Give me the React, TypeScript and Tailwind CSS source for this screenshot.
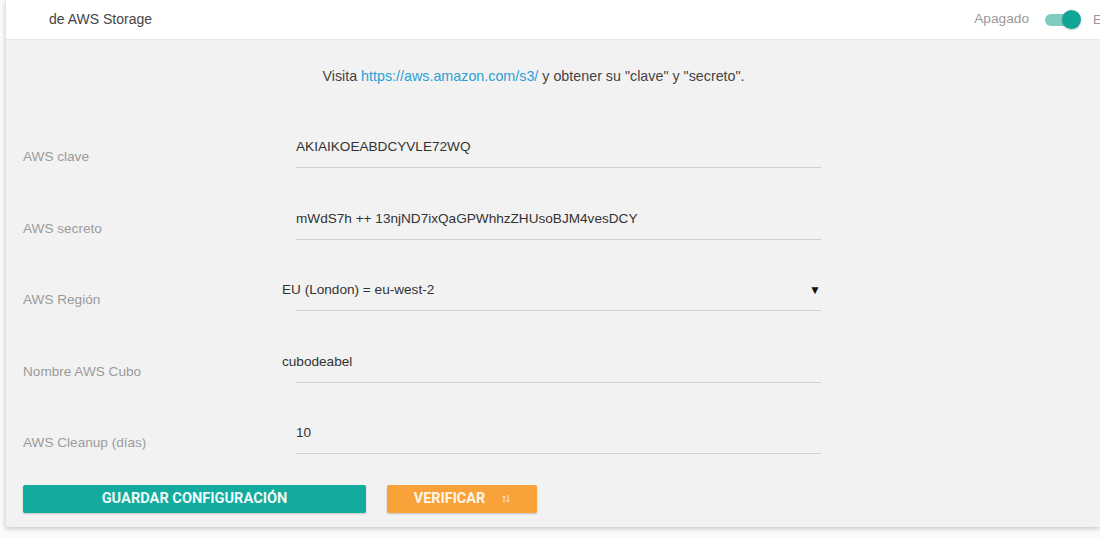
import React from 'react';

const fields = [
  { label: 'AWS clave', value: 'AKIAIKOEABDCYVLE72WQ', shift: false },
  { label: 'AWS secreto', value: 'mWdS7h ++ 13njND7ixQaGPWhhzZHUsoBJM4vesDCY', shift: false },
  { label: 'AWS Región', value: 'EU (London) = eu-west-2', shift: true, select: true },
  { label: 'Nombre AWS Cubo', value: 'cubodeabel', shift: true },
  { label: 'AWS Cleanup (días)', value: '10', shift: false },
];

export default function App() {
  return (
    <div className="min-h-[538px] w-[1100px] overflow-hidden bg-[#fafafa] pl-[5px] font-['Liberation_Sans',Arial,sans-serif]">
      <div className="border-l border-[#e2e2e2] bg-[#f2f2f2] shadow-[0_2px_4px_rgba(0,0,0,0.18)]">
        {/* header */}
        <div className="flex h-[40px] items-center border-b border-[#e8e8e8] bg-white pl-[43px]">
          <span className="text-[14px] text-[#444]">de AWS Storage</span>
          <div className="ml-auto flex items-center">
            <span className="text-[13.7px] text-[#9a9a9a]">Apagado</span>
            <div className="relative ml-[16px] h-[18px] w-[36px]">
              <div className="absolute left-0 top-[4px] h-[12px] w-[33px] rounded-full bg-[#7dcdc3]" />
              <div className="absolute left-[17px] top-[0px] h-[19px] w-[19px] rounded-full bg-[#10a596] shadow-[0_1px_2px_rgba(0,0,0,0.25)]" />
            </div>
            <span className="ml-[12px] w-[7px] overflow-hidden text-[13px] text-[#9a9a9a]">E</span>
          </div>
        </div>

        {/* body */}
        <div className="pl-[17px] pt-[26px] pb-[14px]">
          <p className="h-[20px] text-center text-[14.3px] leading-[20px] text-[#444] pr-[56px]">
            Visita <span className="text-[#2a9fd6]">https://aws.amazon.com/s3/</span> y obtener su "clave" y "secreto".
          </p>

          <div className="mt-[51px] flex flex-col gap-[40.5px]">
            {fields.map((f) => (
              <div key={f.label} className="flex items-end">
                <div className="mb-[1px] w-[273px] text-[13.6px] leading-[20px] text-[#9b9b9b]">{f.label}</div>
                <div className="flex w-[525px] items-center border-b border-[#cfcfcf] pb-[10px]">
                  <span className={`text-[13.6px] leading-[20px] text-[#333] ${f.shift ? '-ml-[14px]' : ''}`}>{f.value}</span>
                  {f.select && <span className="ml-auto mr-[0px] text-[12px] leading-[20px] text-[#111]">▼</span>}
                </div>
              </div>
            ))}
          </div>

          <div className="mt-[31px] flex gap-[21px]">
            <button className="h-[28px] w-[343px] rounded-[2px] bg-[#12ab9d] font-['Roboto',sans-serif] text-[14.6px] font-bold text-white/95 shadow-[0_1px_2px_rgba(0,0,0,0.2)]">
              GUARDAR CONFIGURACIÓN
            </button>
            <button className="flex h-[28px] w-[150px] items-center justify-center gap-[17px] rounded-[2px] bg-[#f9a23a] font-['Roboto',sans-serif] text-[14.4px] font-bold text-white/90 shadow-[0_1px_2px_rgba(0,0,0,0.2)]">
              VERIFICAR
              <svg width="8" height="10" viewBox="0 0 8 10" fill="none" stroke="#fff" strokeOpacity="0.75" strokeWidth="1">
                <path d="M2 9V2M0.5 3.5L2 2L3.5 3.5" />
                <path d="M6 1V8M4.5 6.5L6 8L7.5 6.5" />
              </svg>
            </button>
          </div>
        </div>
      </div>
    </div>
  );
}
